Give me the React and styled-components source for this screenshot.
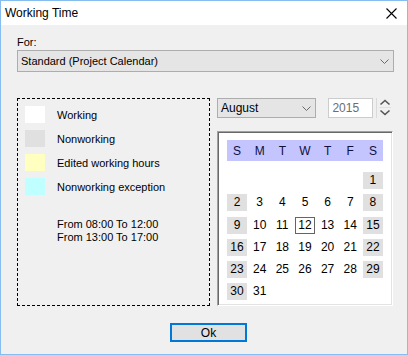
import React from 'react';
import styled, { createGlobalStyle } from 'styled-components';

const GlobalStyle = createGlobalStyle`
  html, body {
    margin: 0;
    padding: 0;
  }
  body {
    font-family: "Liberation Sans", Arial, sans-serif;
    color: #000;
  }
`;

const Window = styled.div`
  width: 408px;
  height: 355px;
  box-sizing: border-box;
  border: 1px solid #86bdf0;
  background: #f0f0f0;
  display: flex;
  flex-direction: column;
`;

const TitleBar = styled.div`
  height: 24px;
  flex: none;
  background: #fff;
  display: flex;
  align-items: center;
  justify-content: space-between;
  padding: 0 10px 0 4px;
  font-size: 12px;
`;

const Body = styled.div`
  padding: 11px 13px 0 16px;
  display: flex;
  flex-direction: column;
`;

const Label = styled.div`
  font-size: 11px;
  line-height: 13px;
  height: 13px;
`;

const Combo = styled.div`
  box-sizing: border-box;
  width: ${(p) => p.width}px;
  height: ${(p) => p.height}px;
  margin-top: ${(p) => p.top || 0}px;
  background: #e5e5e5;
  border: 1px solid #adadad;
  display: flex;
  align-items: center;
  justify-content: space-between;
  padding: 0 4px 0 3px;
  font-size: ${(p) => p.size}px;
`;

const MainRow = styled.div`
  display: flex;
  margin-top: 26px;
`;

const Legend = styled.div`
  box-sizing: border-box;
  width: 193px;
  height: 208px;
  border: 1px dashed #000;
  padding: 7px 7px;
  display: flex;
  flex-direction: column;
  gap: 7px;
`;

const LegendRow = styled.div`
  display: flex;
  align-items: center;
  gap: 12px;
  font-size: 11px;
`;

const Swatch = styled.div`
  width: 20px;
  height: 17px;
  background: ${(p) => p.color};
`;

const Hours = styled.div`
  margin: 16px 0 0 32px;
  font-size: 11px;
  line-height: 13px;
`;

const RightCol = styled.div`
  margin-left: 7px;
  width: 176px;
  display: flex;
  flex-direction: column;
`;

const DateRow = styled.div`
  display: flex;
  align-items: center;
  height: 20px;
`;

const YearBox = styled.div`
  box-sizing: border-box;
  width: 45px;
  height: 20px;
  margin-left: 12px;
  background: #fff;
  border: 1px solid #cccccc;
  color: #6d6d6d;
  font-size: 12px;
  display: flex;
  align-items: center;
  padding-left: 3px;
`;

const Spinner = styled.div`
  margin-left: 3px;
  height: 20px;
  width: 17px;
  border-left: 1px solid #dadada;
  box-sizing: border-box;
  display: flex;
  align-items: center;
  justify-content: center;
`;

const Calendar = styled.div`
  box-sizing: border-box;
  margin-top: 13px;
  width: 176px;
  height: 175px;
  background: #fff;
  border-top: 1px solid #a0a0a0;
  border-left: 1px solid #a0a0a0;
  border-right: 1px solid #fff;
  border-bottom: 1px solid #fff;
  box-shadow: inset 1px 1px 0 #696969, inset -1px -1px 0 #e3e3e3;
  padding: 8px 9px 0 9px;
`;

const WeekHeader = styled.div`
  display: grid;
  grid-template-columns: repeat(7, 20px);
  column-gap: 2.67px;
  height: 21px;
  align-items: center;
  background: #c4c4ff;
  width: 156px;
  font-size: 12px;
  color: #10103c;
  text-align: center;
`;

const DayGrid = styled.div`
  display: grid;
  grid-template-columns: repeat(7, 20px);
  grid-auto-rows: 17px;
  column-gap: 2.67px;
  row-gap: 5.3px;
  margin-top: 11px;
`;

const Day = styled.div`
  box-sizing: border-box;
  font-size: 12px;
  line-height: 17px;
  text-align: center;
  background: ${(p) => (p.weekend ? '#e0e0e0' : 'transparent')};
  border: ${(p) => (p.today ? '1px solid #646464' : 'none')};
  line-height: ${(p) => (p.today ? '15px' : '17px')};
`;

const Footer = styled.div`
  margin-top: 17px;
  padding-left: 153px;
`;

const Button = styled.div`
  box-sizing: border-box;
  width: 77px;
  height: 19px;
  border: 2px solid #0078d7;
  background: #e1e1e1;
  font-size: 12px;
  display: flex;
  align-items: center;
  justify-content: center;
`;

const Chevron = () => (
  <svg width="9" height="5" viewBox="0 0 9 5">
    <polyline points="0.5,0.5 4.5,4.5 8.5,0.5" fill="none" stroke="#6a6a6a" strokeWidth="1" />
  </svg>
);

const CloseIcon = () => (
  <svg width="11" height="11" viewBox="0 0 11 11">
    <path d="M0.5 0.5 L10.5 10.5 M10.5 0.5 L0.5 10.5" stroke="#000" strokeWidth="1.1" />
  </svg>
);

const SpinIcon = () => (
  <svg width="12" height="18" viewBox="0 0 12 18">
    <polyline points="1.5,5.5 6,1.5 10.5,5.5" fill="none" stroke="#555" strokeWidth="1.6" />
    <line x1="0" y1="8.5" x2="12" y2="8.5" stroke="#e0e0e0" strokeWidth="1" />
    <polyline points="1.5,11.5 6,15.5 10.5,11.5" fill="none" stroke="#555" strokeWidth="1.6" />
  </svg>
);

const legend = [
  { color: '#ffffff', label: 'Working' },
  { color: '#e0e0e0', label: 'Nonworking' },
  { color: '#ffffc0', label: 'Edited working hours' },
  { color: '#c0ffff', label: 'Nonworking exception' },
];

const weekDays = ['S', 'M', 'T', 'W', 'T', 'F', 'S'];

const buildDays = () => {
  const cells = [];
  for (let i = 0; i < 6; i += 1) cells.push(null);
  for (let d = 1; d <= 31; d += 1) cells.push(d);
  return cells;
};

const App = () => (
  <>
    <GlobalStyle />
    <Window>
      <TitleBar>
        <span>Working Time</span>
        <CloseIcon />
      </TitleBar>
      <Body>
        <Label>For:</Label>
        <Combo width={377} height={22} top={1} size={11}>
          <span>Standard (Project Calendar)</span>
          <Chevron />
        </Combo>
        <MainRow>
          <Legend>
            {legend.map((item) => (
              <LegendRow key={item.label}>
                <Swatch color={item.color} />
                <span>{item.label}</span>
              </LegendRow>
            ))}
            <Hours>
              From 08:00 To 12:00
              <br />
              From 13:00 To 17:00
            </Hours>
          </Legend>
          <RightCol>
            <DateRow>
              <Combo width={100} height={20} size={12}>
                <span>August</span>
                <Chevron />
              </Combo>
              <YearBox>2015</YearBox>
              <Spinner>
                <SpinIcon />
              </Spinner>
            </DateRow>
            <Calendar>
              <WeekHeader>
                {weekDays.map((d, i) => (
                  <span key={i}>{d}</span>
                ))}
              </WeekHeader>
              <DayGrid>
                {buildDays().map((d, i) => (
                  d === null ? <span key={i} /> : (
                    <Day key={i} weekend={i % 7 === 0 || i % 7 === 6} today={d === 12}>
                      {d}
                    </Day>
                  )
                ))}
              </DayGrid>
            </Calendar>
          </RightCol>
        </MainRow>
        <Footer>
          <Button>Ok</Button>
        </Footer>
      </Body>
    </Window>
  </>
);

export default App;
